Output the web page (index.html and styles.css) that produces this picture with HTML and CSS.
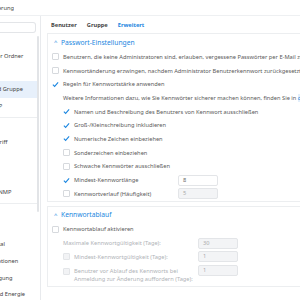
FILE: index.html
```html
<!DOCTYPE html>
<html lang="de">
<head>
<meta charset="utf-8">
<link rel="stylesheet" href="styles.css">
</head>
<body>
<div class="window">
  <div class="titlebar"><div class="title"><span>Systemsteuerung</span></div></div>
  <div class="body">
    <aside class="sidebar">
      <div class="search"></div>
      <div class="nav">
        <div class="cat">Dateifreigabe</div>
        <div class="item">Gemeinsamer Ordner</div>
        <div class="item">Dateidienste</div>
        <div class="item active">Benutzer und Gruppe</div>
        <div class="item">Domain/LDAP</div>
        <div class="sep"></div>
        <div class="cat">Konnektivität</div>
        <div class="item">Externer Zugriff</div>
        <div class="item">Netzwerk</div>
        <div class="item">Sicherheit</div>
        <div class="item">Terminal &amp; SNMP</div>
        <div class="sep"></div>
        <div class="cat">System</div>
        <div class="item">Info-Center</div>
        <div class="item">Anmeldeportal</div>
        <div class="item">Regionale Optionen</div>
        <div class="item">Benachrichtigung</div>
        <div class="item">Hardware und Energie</div>
      </div>
      <div class="scrollbar"></div>
    </aside>
    <main class="main">
      <nav class="tabs">
        <span class="tab">Benutzer</span>
        <span class="tab">Gruppe</span>
        <span class="tab on">Erweitert</span>
      </nav>
      <section class="card">
        <div class="head"><span class="caret">^</span>Passwort-Einstellungen</div>
        <div class="row"><span class="cb"></span><span class="txt">Benutzern, die keine Administratoren sind, erlauben, vergessene Passwörter per E-Mail zurückzusetzen</span></div>
        <div class="row"><span class="cb"></span><span class="txt">Kennwortänderung erzwingen, nachdem Administrator Benutzerkennwort zurückgesetzt hat</span></div>
        <div class="row"><span class="cb ck"><svg viewBox="0 0 8 8"><path d="M1 4.2 L3 6.2 L7 1.6"/></svg></span><span class="txt">Regeln für Kennwortstärke anwenden</span></div>
        <div class="row info"><span class="txt">Weitere Informationen dazu, wie Sie Kennwörter sicherer machen können, finden Sie in <span class="link">diesem Artikel</span></span></div>
        <div class="row sub"><span class="cb ck"><svg viewBox="0 0 8 8"><path d="M1 4.2 L3 6.2 L7 1.6"/></svg></span><span class="txt">Namen und Beschreibung des Benutzers von Kennwort ausschließen</span></div>
        <div class="row sub"><span class="cb ck"><svg viewBox="0 0 8 8"><path d="M1 4.2 L3 6.2 L7 1.6"/></svg></span><span class="txt">Groß-/Kleinschreibung inkludieren</span></div>
        <div class="row sub"><span class="cb ck"><svg viewBox="0 0 8 8"><path d="M1 4.2 L3 6.2 L7 1.6"/></svg></span><span class="txt">Numerische Zeichen einbeziehen</span></div>
        <div class="row sub"><span class="cb"></span><span class="txt">Sonderzeichen einbeziehen</span></div>
        <div class="row sub"><span class="cb"></span><span class="txt">Schwache Kennwörter ausschließen</span></div>
        <div class="row sub"><span class="cb ck"><svg viewBox="0 0 8 8"><path d="M1 4.2 L3 6.2 L7 1.6"/></svg></span><span class="txt lbl1">Mindest-Kennwortlänge</span><span class="field">8</span></div>
        <div class="row sub"><span class="cb"></span><span class="txt lbl1">Kennwortverlauf (Häufigkeit)</span><span class="field off">5</span></div>
      </section>
      <section class="card">
        <div class="head"><span class="caret">^</span>Kennwortablauf</div>
        <div class="row"><span class="cb"></span><span class="txt">Kennwortablauf aktivieren</span></div>
        <div class="row info dis"><span class="txt lbl2">Maximale Kennwortgültigkeit (Tage):</span><span class="field off">30</span></div>
        <div class="row sub dis"><span class="cb off"></span><span class="txt lbl3">Mindest-Kennwortgültigkeit (Tage):</span><span class="field off">1</span></div>
        <div class="row sub dis tall"><span class="cb off"></span><span class="txt lbl3">Benutzer vor Ablauf des Kennworts bei<br>Anmeldung zur Änderung auffordern (Tage):</span><span class="field off">1</span></div>
      </section>
    </main>
  </div>
</div>
</body>
</html>
```
FILE: styles.css
```css
* { box-sizing: border-box; }
html, body { margin: 0; padding: 0; }
body {
  width: 300px; height: 300px; overflow: hidden;
  font-family: "Noto Sans", "DejaVu Sans", sans-serif;
  font-size: 5.7px; color: #5a5a5a; background: #fff;
}
.window { width: 300px; height: 300px; display: flex; flex-direction: column; overflow: hidden; }
.titlebar { height: 16px; flex: none; border-bottom: 1px solid #eef0f2; display: flex; align-items: center; }
.title { width: 14px; overflow: hidden; display: flex; justify-content: flex-end; white-space: nowrap; color: #444; }
.body { flex: 1; display: flex; min-height: 0; }
.sidebar { width: 41px; flex: none; border-right: 1px solid #e8eaed; position: relative; overflow: hidden; }
.search { width: 36px; height: 11px; margin-top: 6px; border: 1px solid #e3e5e8; border-left: none; border-radius: 0 3px 3px 0; background: #fff; }
.nav { margin-left: -35px; width: 72px; padding-top: 1px; }
.cat { height: 14px; line-height: 14px; color: #9a9a9a; white-space: nowrap; font-size: 5px; }
.item { height: 16.7px; line-height: 16.7px; white-space: nowrap; color: #444; }
.item.active { background: #e7f0fb; }
.sep { height: 1px; background: #eceef0; margin: 2px 0 2px; }
.scrollbar { position: absolute; left: 37px; top: 20px; width: 2px; height: 176px; background: #e2e4e7; border-radius: 1px; }
.main { flex: 1; min-width: 0; padding-left: 6px; overflow: hidden; }
.tabs { height: 17px; display: flex; align-items: center; gap: 10px; padding-left: 4px; padding-top: 1px; font-weight: 700; color: #444; }
.tab.on { color: #1a86e0; }
.card { border: 1px solid #eceef0; border-right: none; width: 270px; padding-left: 4px; margin-bottom: 4px; }
.head { height: 16px; display: flex; align-items: center; color: #1a86e0; font-size: 6.7px; white-space: nowrap; }
.caret { width: 9px; padding-left: 2px; font-size: 6px; }
.row { height: 13.7px; display: flex; align-items: center; white-space: nowrap; }
.cb { width: 7px; height: 7px; border: 1px solid #d6d9dd; border-radius: 1px; flex: none; margin-right: 4px; background: #fff; }
.cb.ck { border: none; }
.cb svg { width: 7px; height: 7px; display: block; fill: none; stroke: #1a86e0; stroke-width: 1.2; }
.cb.off { background: #f2f3f5; border-color: #e3e5e8; }
.info { padding-left: 11px; }
.sub { padding-left: 11px; }
.txt { white-space: nowrap; }
.link { color: #1a86e0; background: #e3effb; }
.lbl1 { width: 104px; }
.lbl2 { width: 135px; }
.lbl3 { width: 124px; }
.field { width: 40px; height: 11px; border: 1px solid #e3e5e8; border-radius: 2px; padding-left: 4px; line-height: 9px; color: #666; flex: none; }
.field.off { background: #f3f4f6; color: #aaa; }
.dis { color: #b0b3b7; }
.tall { height: 22px; align-items: flex-start; padding-top: 1px; }
.tall .txt { line-height: 8px; padding-top: 2px; }
.tall .cb { margin-top: 3px; }
```
